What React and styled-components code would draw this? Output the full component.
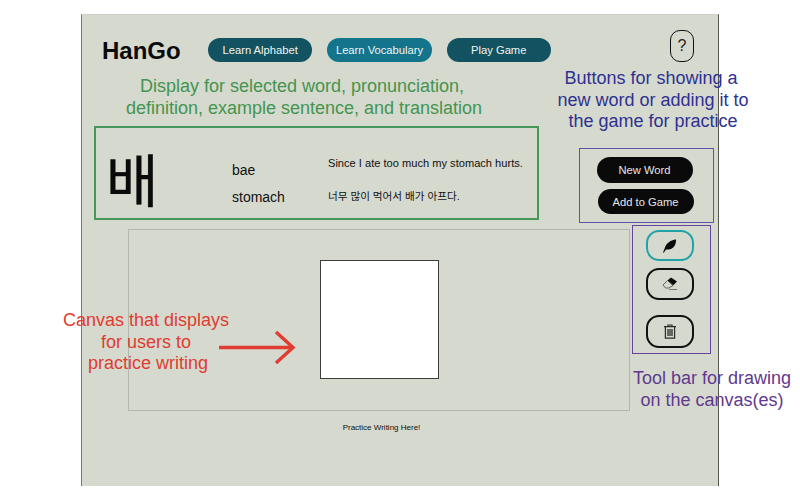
import React from 'react';
import styled, { createGlobalStyle } from 'styled-components';

const GlobalStyle = createGlobalStyle`
  html, body {
    margin: 0;
    background: #fff;
    font-family: "Liberation Sans", Arial, sans-serif;
  }
`

const Stage = styled.div`
  position: relative;
  width: 800px;
  height: 500px;
  overflow: hidden;
  padding: 14px 0 0 81px;
  box-sizing: border-box;
`

const Board = styled.main`
  width: 638px;
  height: 472px;
  box-sizing: border-box;
  background: #d6d9ce;
  border-top: 1px solid #cfd1c7;
  border-left: 1px solid #77776f;
  border-right: 1px solid #55554f;
  padding: 15px 0 0 12px;
`

const TopBar = styled.header`
  display: flex;
  align-items: center;
  height: 32px;
  padding-left: 8px;
`

const Logo = styled.div`
  width: 106px;
  margin-top: 10px;
  font-size: 24px;
  font-weight: 700;
  color: #0b0b0b;
`

const NavPill = styled.button`
  width: 104.3px;
  height: 24px;
  margin: 8px 15px 0 0;
  padding: 0;
  border: 0;
  border-radius: 12px;
  background: ${p => (p.$active ? '#13748b' : '#135260')};
  color: #f2f4f2;
  font: 11.2px "Liberation Sans", Arial, sans-serif;
`

const HelpButton = styled.button`
  width: 24px;
  height: 32px;
  margin-left: auto;
  margin-right: 24px;
  padding: 0;
  box-sizing: border-box;
  background: transparent;
  border: 1.5px solid #111;
  border-radius: 10px;
  color: #222;
  font: 16px "Liberation Sans", Arial, sans-serif;
`

const WordRow = styled.section`
  display: flex;
  align-items: flex-start;
  margin-top: 64px;
`

const WordPanel = styled.div`
  display: grid;
  grid-template-columns: 126px 96px 1fr;
  grid-template-rows: 27px 27px;
  align-content: end;
  flex: none;
  width: 445px;
  height: 94px;
  box-sizing: border-box;
  padding: 0 0 8px 10px;
  border: 2px solid #46975a;
  color: #111;
`

const BigGlyph = styled.div`
  grid-row: 1 / 3;
  align-self: end;
  font: 57px/66px "Noto Sans CJK KR", "Noto Sans", sans-serif;
  -webkit-text-stroke: 0.4px #0a0a0a;
  color: #0a0a0a;
`

const WordText = styled.div`
  align-self: center;
  font-size: 14px;
`

const SentenceText = styled.div`
  align-self: center;
  margin-top: ${p => p.$lift}px;
  font-size: ${p => p.$size}px;
  font-family: "Liberation Sans", "Noto Sans CJK KR", sans-serif;
`

const ActionPanel = styled.div`
  display: flex;
  flex-direction: column;
  align-items: center;
  gap: 6px;
  flex: none;
  width: 135px;
  height: 75px;
  box-sizing: border-box;
  margin: 22px 0 0 40px;
  padding: 8px 2px 0 0;
  border: 1px solid #5a55a6;
`

const ActionButton = styled.button`
  width: 96px;
  height: ${p => p.$h}px;
  flex: none;
  margin-right: ${p => p.$nudge || 0}px;
  padding: 0;
  border: 0;
  border-radius: 13px;
  background: #0a0a0a;
  color: #e6e6e6;
  font: 11.2px "Liberation Sans", Arial, sans-serif;
`

const PracticeRow = styled.section`
  display: flex;
  align-items: flex-start;
  margin-top: 2px;
`

const CanvasColumn = styled.div`
  flex: none;
  width: 502px;
  margin: 4px 0 0 34px;
`

const CanvasArea = styled.div`
  display: flex;
  align-items: center;
  justify-content: center;
  height: 182px;
  box-sizing: border-box;
  border: 1px solid #b4b6ad;
  padding: 0 0 2px 1px;
`

const DrawingCanvas = styled.div`
  width: 119px;
  height: 119px;
  box-sizing: border-box;
  background: #fff;
  border: 1px solid #3c3c3c;
`

const Caption = styled.div`
  margin-top: 12px;
  padding-left: 5px;
  text-align: center;
  font-size: 8px;
  line-height: 10px;
  color: #111;
`

const ToolPanel = styled.div`
  display: flex;
  flex-direction: column;
  align-items: center;
  flex: none;
  width: 79px;
  height: 129px;
  box-sizing: border-box;
  margin-left: 2px;
  padding: 4px 4px 0 0;
  border: 1px solid #66449c;
`

const ToolButton = styled.button`
  display: flex;
  align-items: center;
  justify-content: center;
  width: 48px;
  height: ${p => p.$h}px;
  flex: none;
  margin-top: ${p => p.$gap}px;
  padding: 0;
  box-sizing: border-box;
  background: transparent;
  border: 2px solid ${p => (p.$selected ? '#1fa3a8' : '#111')};
  border-radius: 13px;
`

const Note = styled.div`
  position: absolute;
  left: ${p => p.$x}px;
  top: ${p => p.$y}px;
  width: ${p => p.$w}px;
  text-align: center;
  font-size: 18px;
  line-height: 21.6px;
  color: ${p => p.$color};
`

// the annotations are hand placed, so their lines are not quite centred
const NoteLine = styled.span`
  display: block;
  padding-left: ${p => p.$shift || 0}px;
`

const ArrowMark = styled.svg`
  position: absolute;
  left: 218px;
  top: 330px;
`

const PenIcon = () => (
  <svg width="15" height="14" viewBox="0 0 15 14">
    <path d="M1 13.5 L3 8.5 C4 5 8 1 14 0.5 C14.5 5 11.5 10.5 6.5 10.5 L4 10.5 L1.8 13.8 Z" fill="#0a0a0a" />
  </svg>
)

const EraserIcon = () => (
  <svg width="16" height="14" viewBox="0 0 16 14">
    <path d="M5.5 3.5 L9 0.5 L15 4.5 L11 8.5 Z" fill="#0a0a0a" />
    <path d="M5.5 3.5 L11 8.5 L7 11 L3.5 11 L1 8 Z" fill="none" stroke="#66665f" strokeWidth="1" />
    <path d="M7 12.5 L15 12.5" stroke="#77776f" strokeWidth="1" />
  </svg>
)

const TrashIcon = () => (
  <svg width="14" height="15" viewBox="0 0 14 15" fill="none" stroke="#2a2a28" strokeWidth="1.2">
    <path d="M1 2.6 H13 M5 2.6 V1 H9 V2.6" />
    <path d="M2.4 3 V14.2 H11.6 V3" />
    <path d="M5 5 V12 M7 5 V12 M9 5 V12" strokeWidth="1.3" />
  </svg>
)

export default function App() {
  return (
    <Stage>
      <GlobalStyle />
      <Board>
        <TopBar>
          <Logo>HanGo</Logo>
          <NavPill>Learn Alphabet</NavPill>
          <NavPill $active>Learn Vocabulary</NavPill>
          <NavPill>Play Game</NavPill>
          <HelpButton>?</HelpButton>
        </TopBar>
        <WordRow>
          <WordPanel>
            <BigGlyph>배</BigGlyph>
            <WordText>bae</WordText>
            <SentenceText $size={11.1} $lift={-14}>Since I ate too much my stomach hurts.</SentenceText>
            <WordText>stomach</WordText>
            <SentenceText $size={10.6} $lift={-2}>너무 많이 먹어서 배가 아프다.</SentenceText>
          </WordPanel>
          <ActionPanel>
            <ActionButton $h={26} $nudge={2}>New Word</ActionButton>
            <ActionButton $h={25}>Add to Game</ActionButton>
          </ActionPanel>
        </WordRow>
        <PracticeRow>
          <CanvasColumn>
            <CanvasArea>
              <DrawingCanvas />
            </CanvasArea>
            <Caption>Practice Writing Here!</Caption>
          </CanvasColumn>
          <ToolPanel>
            <ToolButton $selected $h={31} $gap={0}><PenIcon /></ToolButton>
            <ToolButton $h={32} $gap={7}><EraserIcon /></ToolButton>
            <ToolButton $h={33} $gap={15}><TrashIcon /></ToolButton>
          </ToolPanel>
        </PracticeRow>
      </Board>

      <Note $x={99} $y={76} $w={406} $color="#43954f">
        <NoteLine>Display for selected word, pronunciation,</NoteLine>
        <NoteLine $shift={4}>definition, example sentence, and translation</NoteLine>
      </Note>
      <Note $x={531} $y={68} $w={240} $color="#2e3192">
        <NoteLine>Buttons for showing a</NoteLine>
        <NoteLine $shift={4}>new word or adding it to</NoteLine>
        <NoteLine $shift={4}>the game for practice</NoteLine>
      </Note>
      <Note $x={41} $y={310} $w={210} $color="#e03c31">
        <NoteLine>Canvas that displays</NoteLine>
        <NoteLine>for users to</NoteLine>
        <NoteLine $shift={4}>practice writing</NoteLine>
      </Note>
      <Note $x={612} $y={368} $w={200} $color="#5f3a8f">
        <NoteLine>Tool bar for drawing</NoteLine>
        <NoteLine>on the canvas(es)</NoteLine>
      </Note>
      <ArrowMark width="80" height="36" viewBox="0 0 80 36" fill="none" stroke="#e03c31" strokeWidth="3.4">
        <path d="M1 17.5 H74" />
        <path d="M58 2 L75 17.5 L58 33" />
      </ArrowMark>
    </Stage>
  )
}
